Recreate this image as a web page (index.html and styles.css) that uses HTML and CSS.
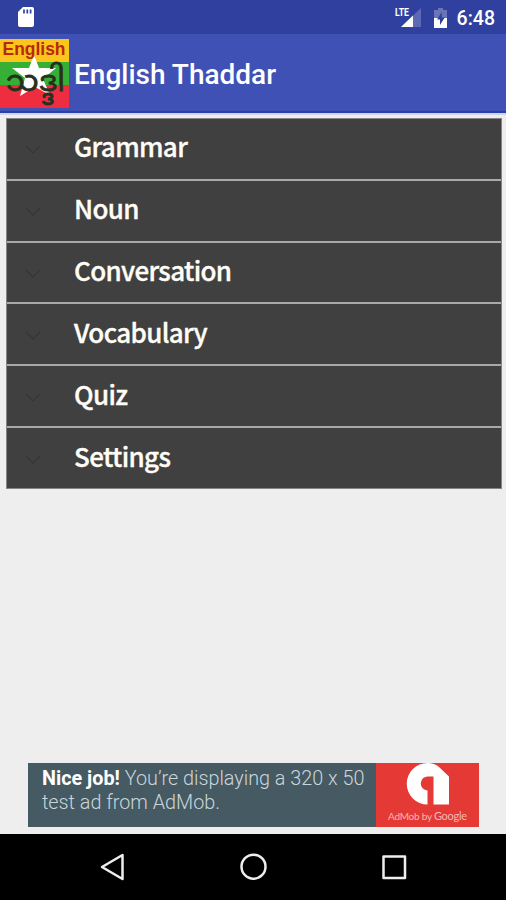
FILE: index.html
```html
<!DOCTYPE html>
<html lang="en">
<head>
<meta charset="utf-8">
<title>English Thaddar</title>
<link rel="stylesheet" href="styles.css">
</head>
<body>
<header class="status">
  <svg class="sd" viewBox="0 0 18 22"><path fill="#fff" d="M6 1h9q2 0 2 2v16q0 2-2 2H3q-2 0-2-2V6z"/><path stroke="#30409e" stroke-width="1.7" d="M7 3.5v4M10.3 3.5v4M13.6 3.5v4"/></svg>
  <div class="indicators">
    <svg class="signal" viewBox="0 0 28 24"><path fill="#5d69b3" d="M26 2v19H6z"/><path fill="#fff" d="M18 9.5V21H6z"/><path fill="#30409e" d="M0 0h15v11H0z"/><text class="lte" x="0" y="9.5" textLength="14" lengthAdjust="spacingAndGlyphs">LTE</text></svg>
    <svg class="battery" viewBox="0 0 15 22"><path fill="#6a75b8" d="M5 1h5v2h4v9H1V3h4z"/><path fill="#fff" d="M1 11h13v10H1z"/><path fill="#30409e" d="M8.8 5 4 12.5h3V18l4.8-7.5h-3z"/></svg>
    <time class="clock">6:48</time>
  </div>
</header>
<div class="appbar">
  <svg class="logo" viewBox="0 0 69 69">
    <path fill="#fcc51b" d="M0 0h69v23H0z"/><path fill="#35b034" d="M0 23h69v23H0z"/><path fill="#ee2e40" d="M0 46h69v23H0z"/>
    <path fill="#fff" d="m34 16 5 13h17L43 40l7 16-15-8-15 9 5-18-13-10h17z"/>
    <text class="logo-en" x="2.5" y="15.5" textLength="63" lengthAdjust="spacingAndGlyphs">English</text>
    <text class="logo-my" x="6" y="51.5">သဒ္ဒါ</text>
  </svg>
  <h1 class="title">English Thaddar</h1>
</div>
<main class="content">
  <ul class="menu">
    <li class="row"><svg class="chevron" viewBox="0 0 18 10"><path d="m2 1 7 7 7-7"/></svg><span>Grammar</span></li>
    <li class="row"><svg class="chevron" viewBox="0 0 18 10"><path d="m2 1 7 7 7-7"/></svg><span>Noun</span></li>
    <li class="row"><svg class="chevron" viewBox="0 0 18 10"><path d="m2 1 7 7 7-7"/></svg><span>Conversation</span></li>
    <li class="row"><svg class="chevron" viewBox="0 0 18 10"><path d="m2 1 7 7 7-7"/></svg><span>Vocabulary</span></li>
    <li class="row"><svg class="chevron" viewBox="0 0 18 10"><path d="m2 1 7 7 7-7"/></svg><span>Quiz</span></li>
    <li class="row"><svg class="chevron" viewBox="0 0 18 10"><path d="m2 1 7 7 7-7"/></svg><span>Settings</span></li>
  </ul>
  <aside class="ad">
    <p class="ad-text"><b>Nice job!</b> You’re displaying a 320 x 50<br>test ad from AdMob.</p>
    <div class="ad-brand">
      <svg class="admob" viewBox="0 0 44 42"><path fill="#fff" d="M21.5 0q7 0 11.5 4l10 9.500V41.500H27.500V13.500H22a6.500 6.500 0 0 0-.5 14v14A20.700 20.700 0 0 1 21.500 0z"/></svg>
      <span class="brand-name">AdMob by <b>Google</b></span>
    </div>
  </aside>
</main>
<nav class="nav">
  <svg viewBox="0 0 28 28"><path d="M23.500 2v24L3 14z"/></svg>
  <svg viewBox="0 0 28 28"><circle cx="13.500" cy="13.700" r="12"/></svg>
  <svg viewBox="0 0 28 28"><rect x="3.500" y="3.500" width="21.500" height="21.500"/></svg>
</nav>
</body>
</html>
```
FILE: styles.css
```css
* { box-sizing: border-box; }
body {
  margin: 0;
  height: 900px;
  display: flex;
  flex-direction: column;
  background: #eee;
  font-family: Roboto, sans-serif;
  overflow: hidden;
}
svg { display: block; flex: none; }
.status {
  height: 34px;
  flex: none;
  display: flex;
  justify-content: space-between;
  padding: 0 11px 0 17px;
  background: #30409e;
}
.sd { width: 18px; height: 22px; margin-top: 6px; }
.indicators { display: flex; }
.signal { width: 28px; height: 24px; margin: 6px 10px 0 0; }
.lte { font: 700 11px Roboto, sans-serif; fill: #fff; }
.battery { width: 15px; height: 22px; margin: 7px 9px 0 0; }
.clock { color: #fff; font-size: 19.5px; font-weight: 500; line-height: 37px; }
.appbar {
  height: 79px;
  flex: none;
  display: flex;
  align-items: flex-start;
  padding-top: 5px;
  background: #4051b5;
  border-bottom: 2px solid #2441ad;
}
.logo { width: 69px; height: 69px; }
.logo-en { font: 700 18px "Liberation Sans", sans-serif; fill: #b72a10; }
.logo-my { font: 29px "Noto Sans Myanmar", "Noto Sans", sans-serif; fill: #26301f; stroke: #26301f; stroke-width: 0.8; }
.title { margin: 0 0 0 5px; color: #fff; font-size: 28px; font-weight: 500; line-height: 71px; }
.content {
  height: 721px;
  flex: none;
  display: flex;
  flex-direction: column;
  justify-content: space-between;
  padding: 3px 4px 7px 6px;
  border-top: 2px solid #d4d4dc;
}
.menu {
  margin: 0;
  padding: 0;
  list-style: none;
  display: flex;
  flex-direction: column;
  height: 371px;
  width: 496px;
  border: 1px solid #858585;
}
.row {
  flex: 1;
  display: flex;
  align-items: center;
  padding: 0 0 5px 17px;
  background: #404040;
  border-bottom: 2px solid #a9a9a9;
  color: #fffdf6;
  font: 500 26px/40px "Noto Sans CJK SC", sans-serif;
  letter-spacing: -0.65px;
  -webkit-text-stroke: 0.35px #fffdf6;
}
.row:last-child { border-bottom: 0; }
.chevron { width: 18px; height: 10px; margin: 8px 32px 0 0; fill: none; stroke: #363636; stroke-width: 1.3; }
.ad { display: flex; width: 451px; height: 64px; margin-left: 22px; background: #455a62; }
.ad-text { flex: 1; margin: 0; padding: 4px 0 0 14px; color: #cbd6dc; font-size: 19.8px; font-weight: 300; line-height: 23.5px; white-space: nowrap; }
.ad-text b { color: #fff; font-weight: 700; }
.ad-brand { width: 103px; display: flex; flex-direction: column; align-items: center; background: #e53935; }
.admob { width: 44px; height: 42px; }
.brand-name { margin-top: 4px; color: #f6b8b4; font: 10px/14px Lato, sans-serif; letter-spacing: -0.25px; white-space: nowrap; }
.brand-name b { font-weight: 400; font-size: 11px; }
.nav { height: 66px; flex: none; display: flex; justify-content: space-between; align-items: center; padding: 0 98px 0 99px; background: #000; }
.nav svg { width: 28px; height: 28px; fill: none; stroke: #eee; stroke-width: 2.5; stroke-linejoin: round; }
```
